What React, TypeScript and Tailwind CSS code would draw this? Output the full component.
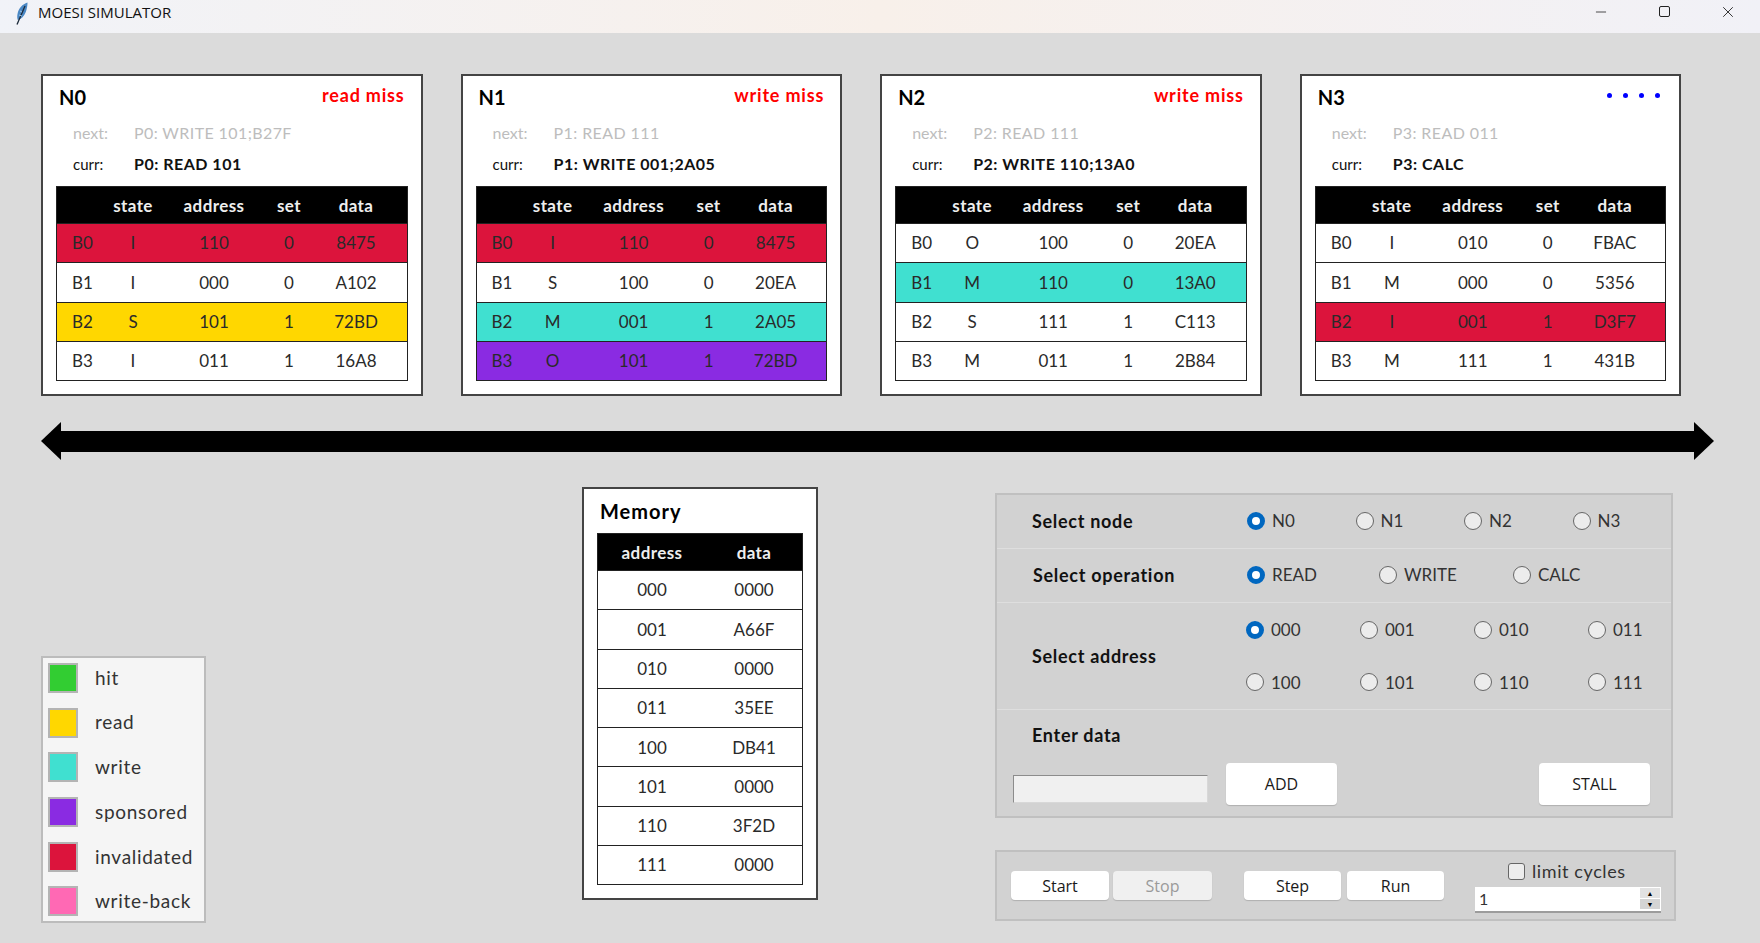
import { Minus, X } from 'lucide-react';

const GOTHIC = "font-['Lato','Liberation_Sans',sans-serif]";

const crimson = 'bg-[#dc143c]';
const gold = 'bg-[#ffd700]';
const turquoise = 'bg-[#40e0d0]';
const violet = 'bg-[#8a2be2]';

interface Block {
  state: string;
  address: string;
  set: string;
  data: string;
  color?: string;
}

interface Node {
  name: string;
  status: string;
  dots?: boolean;
  next: string;
  curr: string;
  blocks: Block[];
}

const nodes: Node[] = [
  {
    name: 'N0',
    status: 'read miss',
    next: 'P0: WRITE 101;B27F',
    curr: 'P0: READ 101',
    blocks: [
      { state: 'I', address: '110', set: '0', data: '8475', color: crimson },
      { state: 'I', address: '000', set: '0', data: 'A102' },
      { state: 'S', address: '101', set: '1', data: '72BD', color: gold },
      { state: 'I', address: '011', set: '1', data: '16A8' },
    ],
  },
  {
    name: 'N1',
    status: 'write miss',
    next: 'P1: READ 111',
    curr: 'P1: WRITE 001;2A05',
    blocks: [
      { state: 'I', address: '110', set: '0', data: '8475', color: crimson },
      { state: 'S', address: '100', set: '0', data: '20EA' },
      { state: 'M', address: '001', set: '1', data: '2A05', color: turquoise },
      { state: 'O', address: '101', set: '1', data: '72BD', color: violet },
    ],
  },
  {
    name: 'N2',
    status: 'write miss',
    next: 'P2: READ 111',
    curr: 'P2: WRITE 110;13A0',
    blocks: [
      { state: 'O', address: '100', set: '0', data: '20EA' },
      { state: 'M', address: '110', set: '0', data: '13A0', color: turquoise },
      { state: 'S', address: '111', set: '1', data: 'C113' },
      { state: 'M', address: '011', set: '1', data: '2B84' },
    ],
  },
  {
    name: 'N3',
    status: '',
    dots: true,
    next: 'P3: READ 011',
    curr: 'P3: CALC',
    blocks: [
      { state: 'I', address: '010', set: '0', data: 'FBAC' },
      { state: 'M', address: '000', set: '0', data: '5356' },
      { state: 'I', address: '001', set: '1', data: 'D3F7', color: crimson },
      { state: 'M', address: '111', set: '1', data: '431B' },
    ],
  },
];

const memory = [
  ['000', '0000'],
  ['001', 'A66F'],
  ['010', '0000'],
  ['011', '35EE'],
  ['100', 'DB41'],
  ['101', '0000'],
  ['110', '3F2D'],
  ['111', '0000'],
];

const legend = [
  ['hit', 'bg-[#32cd32]'],
  ['read', 'bg-[#ffd700]'],
  ['write', 'bg-[#40e0d0]'],
  ['sponsored', 'bg-[#8a2be2]'],
  ['invalidated', 'bg-[#dc143c]'],
  ['write-back', 'bg-[#ff69b4]'],
];

function Feather() {
  return (
    <svg width="16" height="24" viewBox="0 0 16 24">
      <path d="M13.5 0.5C8.5 2 4.5 6.5 3.5 12c-.5 2.5-.3 4.5.3 6 3.5-1 6.5-4 8-8 1-3 1.8-6.5 1.7-9.5z" fill="#4a88c4" />
      <path d="M11 4L3 22.5" stroke="#1c2a3a" strokeWidth="1.3" fill="none" />
      <path d="M6 9l2 1M5 13l3 1" stroke="#b5d5f0" strokeWidth="0.8" fill="none" />
    </svg>
  );
}

function TitleBar() {
  return (
    <div className="h-[33px] shrink-0 flex items-center bg-gradient-to-r from-[#f1f3f8] via-[#f8f0ea] to-[#f1f1f7]">
      <div className="ml-[14px] w-[24px] -mt-[5px]">
        <Feather />
      </div>
      <span className="-mt-[8px] text-[15px] text-[#111] font-['Open_Sans',sans-serif]">MOESI SIMULATOR</span>
      <div className="ml-auto flex items-center -mt-[10px] text-[#222]">
        <Minus size={16} strokeWidth={1.2} className="mr-[50px]" />
        <div className="w-[11px] h-[11px] border border-[#222] rounded-[2px] mr-[49px]" />
        <X size={18} strokeWidth={1.2} className="mr-[23px]" />
      </div>
    </div>
  );
}

function NodeCard({ node }: { node: Node }) {
  return (
    <div className="w-[381.5px] h-[321.5px] bg-white border-2 border-[#444] px-[13px] flex flex-col">
      <div className="h-[39px] shrink-0 flex items-center justify-between pt-[3px] pl-[3px] pr-[3px]">
        <span className="text-[20px] font-bold text-black">{node.name}</span>
        {node.dots ? (
          <span className="flex gap-[11px] mb-[4px] mr-[3px]">
            <i className="w-[5px] h-[5px] rounded-full bg-[#0000ff]" />
            <i className="w-[5px] h-[5px] rounded-full bg-[#0000ff]" />
            <i className="w-[5px] h-[5px] rounded-full bg-[#0000ff]" />
            <i className="w-[5px] h-[5px] rounded-full bg-[#0000ff]" />
          </span>
        ) : (
          <span className="text-[18px] font-bold text-[#ff0000] tracking-[0.8px] mb-[4px]">{node.status}</span>
        )}
      </div>
      <div className="h-[33px] shrink-0 flex items-center pl-[17px] pt-[2px] text-[16px] text-[#bdbdbd]">
        <span className="w-[61px]">next:</span>
        <span className="tracking-[0.4px]">{node.next}</span>
      </div>
      <div className="h-[38px] shrink-0 flex items-center pl-[17px] pb-[6px] text-[#111]">
        <span className="w-[61px] text-[15px]">curr:</span>
        <span className="text-[16px] font-bold tracking-[0.5px]">{node.curr}</span>
      </div>
      <div className="border border-[#222]">
        <div className="h-[36px] pt-[1px] bg-black text-[#eee] text-[17px] font-bold tracking-[0.4px] grid grid-cols-[46px_60px_102px_48px_86px] items-center text-center">
          <span />
          <span>state</span>
          <span>address</span>
          <span>set</span>
          <span>data</span>
        </div>
        {node.blocks.map((b, i) => (
          <div
            key={i}
            className={`h-[39.3px] border-t border-[#222] text-[17px] text-[#2a2a2a] grid grid-cols-[46px_60px_102px_48px_86px] items-center text-center ${b.color || 'bg-white'}`}
          >
            <span className="text-left pl-[15px]">B{i}</span>
            <span>{b.state}</span>
            <span>{b.address}</span>
            <span>{b.set}</span>
            <span>{b.data}</span>
          </div>
        ))}
      </div>
    </div>
  );
}

function Bus() {
  return (
    <div className="h-[38px] flex items-center">
      <div className="w-0 h-0 border-y-[19px] border-y-transparent border-r-[20px] border-r-black" />
      <div className="flex-1 h-[21px] bg-black" />
      <div className="w-0 h-0 border-y-[19px] border-y-transparent border-l-[20px] border-l-black" />
    </div>
  );
}

function Legend() {
  return (
    <div className="w-[165px] h-[267px] self-end bg-[#f5f5f5] border-2 border-[#bcbcbc] pl-[5px] pt-[5px] flex flex-col gap-[14.7px]">
      {legend.map(([label, color]) => (
        <div key={label} className="h-[30px] flex items-center">
          <div className={`w-[30px] h-[30px] border-2 border-[#b4b4b4] ${color}`} />
          <span className="ml-[17px] text-[19px] text-[#333] tracking-[0.7px]">{label}</span>
        </div>
      ))}
    </div>
  );
}

function Memory() {
  return (
    <div className="w-[236px] h-[413px] ml-[376px] bg-white border-2 border-[#444] px-[13px]">
      <div className="h-[44px] flex items-center pl-[3px] text-[20px] font-bold tracking-[1px] text-black">Memory</div>
      <div className="border border-[#222]">
        <div className="h-[36px] pt-[1px] bg-black text-[#eee] text-[17px] font-bold tracking-[0.4px] grid grid-cols-[108px_1fr] items-center text-center">
          <span>address</span>
          <span>data</span>
        </div>
        {memory.map(([address, data]) => (
          <div key={address} className="h-[39.3px] border-t border-[#222] text-[17px] text-[#2a2a2a] grid grid-cols-[108px_1fr] items-center text-center">
            <span>{address}</span>
            <span>{data}</span>
          </div>
        ))}
      </div>
    </div>
  );
}

function Radio({ name, label, checked, width }: { name: string; label: string; checked?: boolean; width: string }) {
  return (
    <label className={`shrink-0 flex items-center gap-[7px] text-[17px] text-[#333] ${width}`}>
      <input
        type="radio"
        name={name}
        defaultChecked={checked}
        className="appearance-none shrink-0 w-[18px] h-[18px] rounded-full border border-[#666] bg-[#ececec] checked:border-[5px] checked:border-[#0067c0] checked:bg-white"
      />
      {label}
    </label>
  );
}

function PanelButton({ label, className }: { label: string; className: string }) {
  return (
    <button className={`bg-white rounded-[4px] shadow-[0_1px_1px_#b0b0b0] text-[16px] text-[#1a1a1a] font-['Open_Sans',sans-serif] ${className}`}>
      {label}
    </button>
  );
}

function OperationPanel() {
  return (
    <div className="w-[678px] h-[325px] -ml-[1px] bg-[#d2d2d2] border-2 border-[#c0c0c0] flex flex-col">
      <div className="h-[54px] shrink-0 flex items-center pl-[35px] pb-[1px] border-b border-[#dedede]">
        <span className="shrink-0 w-[215px] text-[18px] font-bold tracking-[0.7px] text-[#111]">Select node</span>
        {['N0', 'N1', 'N2', 'N3'].map((n, i) => (
          <Radio key={n} name="node" label={n} checked={i === 0} width={i === 3 ? 'w-[80px]' : 'w-[108.5px]'} />
        ))}
      </div>
      <div className="h-[54px] shrink-0 flex items-center pl-[36px] pb-[1px] border-b border-[#dedede]">
        <span className="shrink-0 w-[214px] text-[18px] font-bold tracking-[0.7px] text-[#111]">Select operation</span>
        <Radio name="op" label="READ" checked width="w-[132px]" />
        <Radio name="op" label="WRITE" width="w-[134px]" />
        <Radio name="op" label="CALC" width="w-[100px]" />
      </div>
      <div className="h-[107px] shrink-0 flex items-center pl-[35px] border-b border-[#dedede]">
        <span className="shrink-0 w-[214px] text-[18px] font-bold tracking-[0.7px] text-[#111]">Select address</span>
        <div className="shrink-0 grid grid-cols-[114px_114px_114px_70px] gap-y-[27px]">
          {['000', '001', '010', '011', '100', '101', '110', '111'].map((a, i) => (
            <Radio key={a} name="addr" label={a} checked={i === 0} width="" />
          ))}
        </div>
      </div>
      <div className="pl-[35px] pt-[12px] text-[18px] font-bold tracking-[0.7px] text-[#111]">Enter data</div>
      <div className="flex items-end pl-[16px] pr-[21px] mt-[14px]">
        <input className="w-[195px] h-[28px] mb-[2px] bg-[#f0f0f0] border border-[#d8d8d8] border-t-[#8c8c8c] border-l-[#8c8c8c]" />
        <PanelButton label="ADD" className="w-[111px] h-[42px] ml-[18px]" />
        <PanelButton label="STALL" className="w-[111px] h-[42px] ml-auto" />
      </div>
    </div>
  );
}

function RunPanel() {
  return (
    <div className="w-[681px] h-[71px] mt-[32px] -ml-[1px] bg-[#d2d2d2] border-2 border-[#c0c0c0] flex items-center pl-[14px]">
      <PanelButton label="Start" className="w-[98px] h-[29px]" />
      <PanelButton label="Stop" className="w-[99px] h-[29px] ml-[4px] !bg-[#f0f0f0] !text-[#9a9a9a]" />
      <PanelButton label="Step" className="w-[97px] h-[29px] ml-[32px]" />
      <PanelButton label="Run" className="w-[97px] h-[29px] ml-[6px]" />
      <div className="ml-[31px] flex flex-col items-stretch">
        <label className="flex items-center ml-[33px] h-[22px] text-[18px] tracking-[0.6px] text-[#333]">
          <input type="checkbox" className="appearance-none w-[17px] h-[17px] rounded-[3px] border border-[#666] bg-[#ededed]" />
          <span className="ml-[7px]">limit cycles</span>
        </label>
        <div className="w-[186px] h-[26px] mt-[4px] -mb-[2px] bg-white border-b-2 border-[#9c9c9c] flex items-center pl-[4px] text-[16px] text-[#333]">
          <span className="flex-1">1</span>
          <div className="w-[20px] mr-[1px] flex flex-col gap-[1px]">
            <div className="h-[10px] bg-[#e2e2e2] flex items-center justify-center text-[7px] text-black">▲</div>
            <div className="h-[10px] bg-[#d4d4d4] flex items-center justify-center text-[7px] text-black">▼</div>
          </div>
        </div>
      </div>
    </div>
  );
}

export default function App() {
  return (
    <div className={`w-[1760px] h-[943px] overflow-hidden bg-[#dbdbdb] flex flex-col ${GOTHIC}`}>
      <TitleBar />
      <div className="pl-[41px] pr-[46px] pt-[41px] flex flex-col">
        <div className="flex gap-[38.1px]">
          {nodes.map(n => (
            <NodeCard key={n.name} node={n} />
          ))}
        </div>
        <div className="mt-[26.5px]">
          <Bus />
        </div>
        <div className="flex mt-[27px] h-[436px]">
          <Legend />
          <Memory />
          <div className="ml-[178px] mt-[6px] flex flex-col">
            <OperationPanel />
            <RunPanel />
          </div>
        </div>
      </div>
    </div>
  );
}
